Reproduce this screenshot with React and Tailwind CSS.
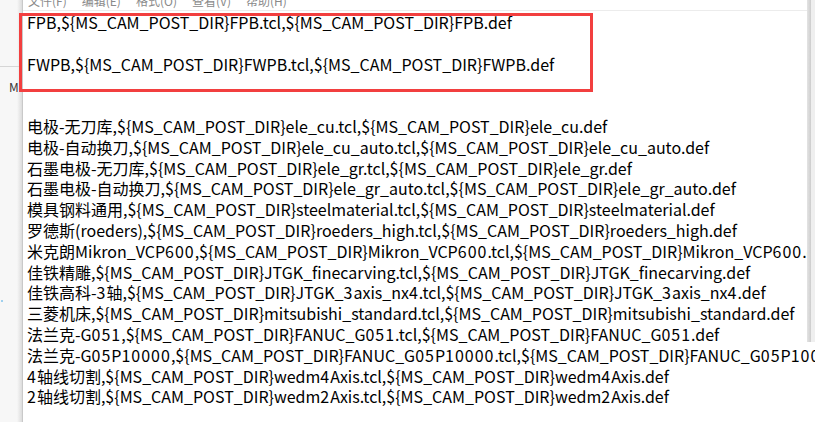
import React from "react";

const D = "${MS_CAM_POST_DIR}";
const lines = [
  `FPB,${D}FPB.tcl,${D}FPB.def`,
  "",
  `FWPB,${D}FWPB.tcl,${D}FWPB.def`,
  "",
  "",
  `电极-无刀库,${D}ele_cu.tcl,${D}ele_cu.def`,
  `电极-自动换刀,${D}ele_cu_auto.tcl,${D}ele_cu_auto.def`,
  `石墨电极-无刀库,${D}ele_gr.tcl,${D}ele_gr.def`,
  `石墨电极-自动换刀,${D}ele_gr_auto.tcl,${D}ele_gr_auto.def`,
  `模具钢料通用,${D}steelmaterial.tcl,${D}steelmaterial.def`,
  `罗德斯(roeders),${D}roeders_high.tcl,${D}roeders_high.def`,
  `米克朗Mikron_VCP600,${D}Mikron_VCP600.tcl,${D}Mikron_VCP600.def`,
  `佳铁精雕,${D}JTGK_finecarving.tcl,${D}JTGK_finecarving.def`,
  `佳铁高科-3轴,${D}JTGK_3axis_nx4.tcl,${D}JTGK_3axis_nx4.def`,
  `三菱机床,${D}mitsubishi_standard.tcl,${D}mitsubishi_standard.def`,
  `法兰克-G051,${D}FANUC_G051.tcl,${D}FANUC_G051.def`,
  `法兰克-G05P10000,${D}FANUC_G05P10000.tcl,${D}FANUC_G05P10000.def`,
  `4轴线切割,${D}wedm4Axis.tcl,${D}wedm4Axis.def`,
  `2轴线切割,${D}wedm2Axis.tcl,${D}wedm2Axis.def`,
];

const menus = ["文件(F)", "编辑(E)", "格式(O)", "查看(V)", "帮助(H)"];

function Line({ text }) {
  const parts = text.split(/(\d+)/);
  return (
    <div className="h-[20.8px] whitespace-pre">
      {parts.map((p, i) =>
        /^\d+$/.test(p) ? (
          <span key={i} className="tracking-[1px]">{p}</span>
        ) : (
          <React.Fragment key={i}>{p}</React.Fragment>
        )
      )}
    </div>
  );
}

export default function App() {
  return (
    <div className="relative flex h-[422px] w-[815px] overflow-hidden bg-white font-['Noto_Sans_CJK_SC',sans-serif]">
      {/* left strip: window behind */}
      <div className="relative flex w-[22px] shrink-0 flex-col bg-[#f7f7f7]">
        <div className="h-[66px]" />
        <div className="h-px bg-[#d6d6d6]" />
        <div className="mt-[13px] pl-[9px] text-[12px] leading-[14px] text-[#333]">M</div>
        <div className="ml-px mt-[206px] h-[2px] w-[2px] bg-[#9fd0ee]" />
        <div className="absolute right-0 top-0 h-full w-[5px] bg-gradient-to-r from-transparent to-[#dcdcdc]" />
      </div>
      <div className="w-px shrink-0 bg-[#c9c9c9]" />

      {/* notepad */}
      <div className="flex min-w-0 flex-1 flex-col">
        <div className="h-[10px] overflow-hidden">
          <div className="mt-[-5px] flex gap-[15px] pl-[5px] text-[12px] leading-[12px] text-[#8a8a8a]">
            {menus.map((m) => (
              <span key={m} className="whitespace-pre">{m}</span>
            ))}
          </div>
        </div>
        <div className="h-px bg-[#ececec]" />
        <div className="pl-[4px] pt-px text-[16px] leading-[20.8px] text-black">
          {lines.map((l, i) => (
            <Line key={i} text={l} />
          ))}
        </div>
      </div>

      {/* right edge band */}
      <div className="flex h-[342px] w-[8px] shrink-0 self-start">
        <div className="w-[4px] bg-gradient-to-r from-[#e4e4e4] to-[#cdcdcd]" />
        <div className="flex-1 bg-[#efefef]" />
      </div>

      {/* red annotation box */}
      <div className="absolute left-[19px] top-[13px] z-20 h-[79px] w-[574px] border-[3px] border-[#f23f3f]" />
    </div>
  );
}
